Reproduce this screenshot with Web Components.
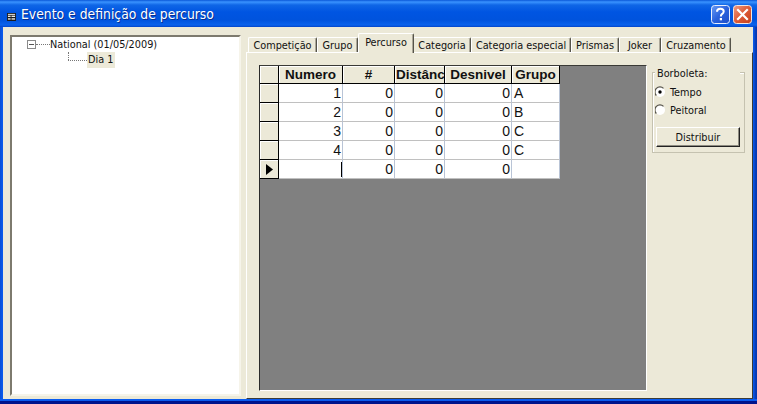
<!DOCTYPE html>
<html>
<head>
<meta charset="utf-8">
<title>Evento e definição de percurso</title>
<style>
  html, body { margin: 0; padding: 0; background: #0a50d8; }
</style>
</head>
<body>
<xp-window title="Evento e definição de percurso">
  <event-tree></event-tree>
  <tab-panel>
    <course-grid></course-grid>
    <side-group></side-group>
  </tab-panel>
</xp-window>

<script>
const UI_FONT = '"DejaVu Sans Condensed", "DejaVu Sans", sans-serif';

class XpWindow extends HTMLElement {
  constructor() {
    super();
    this.shadowDOM = this.attachShadow({mode: "open"});
  }

  connectedCallback() {
    this.shadowDOM.innerHTML =
    `<style>
      * { box-sizing: border-box; }
      :host {
        display: flex;
        flex-direction: column;
        box-sizing: border-box;
        width: 757px;
        height: 404px;
        overflow: hidden;
        background: linear-gradient(to right, #0a4fd6 0, #0a5cf0 3px, #0a5cf0 753px, #0638b0 756px);
      }
      .titlebar {
        flex: none;
        height: 27px;
        display: flex;
        align-items: center;
        padding: 0 5px 0 7px;
        color: white;
        background: linear-gradient(to bottom, #0a58d8 0, #3a93ff 2px, #0f66e6 5px, #0055e2 12px, #0053dd 20px, #0a62ec 25px, #0344c8 27px);
      }
      .sysicon { width: 9px; height: 8px; margin: 6px 5px 0 0; flex: none; }
      .title {
        flex: 1;
        font: 13.8px ${UI_FONT};
        padding-top: 1px;
        text-shadow: 1px 1px 0 #0b2f8c;
        white-space: nowrap;
      }
      .btn { width: 19px; height: 19px; flex: none; margin: 2px 0 0 3px; display: block; }
      .body {
        flex: none;
        height: 372px;
        display: flex;
        background: #ece9d8;
        padding: 6px 0 0 7px;
        margin: 0 4px 0 3px;
        gap: 5px;
      }
      .bottom { flex: 1; background: linear-gradient(#0a5cf0 0 2px, #00138c 2px); }
    </style>
    <div class="titlebar">
      <svg class="sysicon" viewBox="0 0 10 9">
        <rect width="10" height="9" fill="#1c1c1c"/>
        <rect x="1" y="1" width="8" height="1" fill="#fff"/>
        <rect x="1" y="3" width="3" height="1.4" fill="#fff"/><rect x="5" y="3" width="4" height="1.4" fill="#fff"/>
        <rect x="1" y="6" width="3" height="1.4" fill="#fff"/><rect x="5" y="6" width="4" height="1.4" fill="#fff"/>
      </svg>
      <div class="title">${this.getAttribute("title")}</div>
      <svg class="btn" viewBox="0 0 19 19">
        <defs><linearGradient id="h" x1="0" y1="0" x2="1" y2="1"><stop offset="0" stop-color="#6a9cf5"/><stop offset=".5" stop-color="#2a62dd"/><stop offset="1" stop-color="#1f4fc8"/></linearGradient></defs>
        <rect x=".5" y=".5" width="18" height="18" rx="3" fill="url(#h)" stroke="#e8eefc"/>
        <path d="M6 6.8C6 4.6 7.4 3.7 9.4 3.7c2 0 3.3 1.1 3.3 2.7 0 1.4-.8 2-1.8 2.7-.8.6-1 1-1 1.9v.6" fill="none" stroke="#fff" stroke-width="2"/>
        <rect x="8.8" y="13" width="2.2" height="2.3" fill="#fff"/>
      </svg>
      <svg class="btn" viewBox="0 0 19 19">
        <defs><linearGradient id="c" x1="0" y1="0" x2="1" y2="1"><stop offset="0" stop-color="#ec9c84"/><stop offset=".5" stop-color="#dd5a36"/><stop offset="1" stop-color="#c2401c"/></linearGradient></defs>
        <rect x=".5" y=".5" width="18" height="18" rx="3" fill="url(#c)" stroke="#f3e6e0"/>
        <path d="M5 5l9 9M14 5l-9 9" stroke="#fff" stroke-width="2.2" stroke-linecap="square"/>
      </svg>
    </div>
    <div class="body"><slot></slot></div>
    <div class="bottom"></div>`;
  }
}

class EventTree extends HTMLElement {
  constructor() {
    super();
    this.shadowDOM = this.attachShadow({mode: "open"});
  }

  connectedCallback() {
    this.shadowDOM.innerHTML =
    `<style>
      * { box-sizing: border-box; }
      :host {
        display: block;
        box-sizing: border-box;
        flex: none;
        width: 231px;
        margin: 2px 0 3px 0;
        background: white;
        border: 2px solid;
        border-color: #7d7a6e #f6f4ea #f6f4ea #7d7a6e;
        padding: 0 0 0 15px;
        font: 10.8px ${UI_FONT};
        color: #111;
      }
      .row { display: flex; align-items: center; height: 15px; white-space: nowrap; }
      .box {
        width: 9px; height: 9px; flex: none;
        border: 1px solid #8a8a8a;
        background: linear-gradient(#555,#555) center/5px 1px no-repeat;
      }
      .dots { flex: none; border-top: 1px dotted #777; height: 0; }
      .child { padding-left: 41px; position: relative; height: 16px; }
      .child::before {
        content: ""; position: absolute; left: 41px; top: 0; height: 8px;
        border-left: 1px dotted #777;
      }
      .sel { background: #ece9d8; padding: 0 1px; height: 16px; line-height: 16px; width: 28px; }
    </style>
    <div class="row"><span class="box"></span><span class="dots" style="width:14px"></span><span>National (01/05/2009)</span></div>
    <div class="row child"><span class="dots" style="width:19px"></span><span class="sel">Dia 1</span></div>`;
  }
}

class TabPanel extends HTMLElement {
  constructor() {
    super();
    this.shadowDOM = this.attachShadow({mode: "open"});
  }

  connectedCallback() {
    const tabs = [["Competição",69],["Grupo",41],["Percurso",56],["Categoria",58],["Categoria especial",100],["Prismas",48],["Joker",42],["Cruzamento",70]];
    this.shadowDOM.innerHTML =
    `<style>
      * { box-sizing: border-box; }
      :host {
        display: flex;
        box-sizing: border-box;
        flex-direction: column;
        flex: none;
        width: 507px;
        font: 10.8px ${UI_FONT};
        color: #111;
      }
      .tabs { display: flex; height: 20px; padding: 0 0 0 2px; flex: none; align-items: flex-end; }
      .tab {
        height: 16px;
        display: flex; align-items: center; justify-content: center;
        background: #ece9d8;
        border: 1px solid #fff;
        border-bottom: 0;
        border-right: 1px solid #55534a;
        box-shadow: inset -1px 0 0 #aca899;
        white-space: nowrap;
        border-radius: 2px 2px 0 0;
      }
      .tab.on {
        height: 20px;
        padding-bottom: 2px;
        margin-right: -1px;
        position: relative;
        z-index: 1;
      }
      .page {
        flex: 1;
        min-height: 0;
        display: flex;
        gap: 5px;
        background: #ece9d8;
        border: 1px solid;
        border-color: #fff #3d3c36 #3d3c36 #fff;
        padding: 12px 6px 7px 12px;
        margin-top: -1px;
      }
    </style>
    <div class="tabs">
      ${tabs.map(([t, w]) => `<div class="tab${t === "Percurso" ? " on" : ""}" style="width:${w}px">${t}</div>`).join("")}
    </div>
    <div class="page"><slot></slot></div>`;
  }
}

class CourseGrid extends HTMLElement {
  constructor() {
    super();
    this.shadowDOM = this.attachShadow({mode: "open"});
  }

  connectedCallback() {
    const rows = [["1","0","0","0","A"],["2","0","0","0","B"],["3","0","0","0","C"],["4","0","0","0","C"]];
    const head = ["Numero","#","Distânc","Desnivel","Grupo"];
    let html = `<div class="c rh"></div>` + head.map(h => `<div class="c hd">${h}</div>`).join("");
    rows.forEach(r => {
      html += `<div class="c rh"></div>` + r.map((v, i) => `<div class="c ${i == 4 ? "l" : "n"}">${v}</div>`).join("");
    });
    html += `<div class="c rh cur"><svg width="7" height="11" viewBox="0 0 7 11"><path d="M0 0l7 5.5L0 11z" fill="#000"/></svg></div>
      <div class="c n caret"><span></span></div><div class="c n">0</div><div class="c n">0</div><div class="c n">0</div><div class="c l"></div>`;
    this.shadowDOM.innerHTML =
    `<style>
      * { box-sizing: border-box; }
      :host {
        display: block;
        box-sizing: border-box;
        flex: none;
        width: 388px;
        background: #808080;
        border: 1px solid #000;
        border-color: #3a3a36 #fff #fff #2a2a2a;
        font: 14px "Liberation Sans", Arial, sans-serif;
        color: #111;
      }
      .grid {
        display: grid;
        grid-template-columns: 19px 64px 52px 50px 67px 48px;
        grid-template-rows: 18px;
        grid-auto-rows: 19px;
        width: 300px;
      }
      .c {
        line-height: 18px;
        background: white;
        border-right: 1px solid #b9c4d6;
        border-bottom: 1px solid #c0c0c0;
        padding: 0 1px;
        white-space: nowrap;
        overflow: hidden;
      }
      .rh { background: #ece9d8; border-right: 1px solid #000; border-bottom: 1px solid #000; display: flex; align-items: center; justify-content: center; box-shadow: inset 1px 1px 0 #fff; }
      .hd { background: #ece9d8; font-weight: bold; font-size: 13.5px; line-height: 17px; text-align: center; border-right: 1px solid #000; border-bottom: 1px solid #000; box-shadow: inset 1px 1px 0 #fff; }
      .n { text-align: right; }
      .l { text-align: left; padding-left: 2px; }
      .caret { display: flex; justify-content: flex-end; align-items: center; padding: 0; }
      .caret span { width: 1px; height: 15px; background: #000; }
    </style>
    <div class="grid">${html}</div>`;
  }
}

class SideGroup extends HTMLElement {
  constructor() {
    super();
    this.shadowDOM = this.attachShadow({mode: "open"});
  }

  connectedCallback() {
    const radio = dot => `<svg width="10" height="12" viewBox="0 0 10 12">
        <circle cx="5" cy="6" r="5" fill="#fff"/>
        <path d="M1.4 9.5A4.5 4.5 0 0 1 8.5 2.4" fill="none" stroke="#55534a" stroke-width="1.2"/>
        ${dot ? '<circle cx="5" cy="6" r="1.7" fill="#000"/>' : ""}
      </svg>`;
    this.shadowDOM.innerHTML =
    `<style>
      * { box-sizing: border-box; }
      :host {
        display: block;
        box-sizing: border-box;
        flex: none;
        width: 93px;
        height: 81px;
        margin-top: 7px;
        border: 1px solid #c5c2b0;
        box-shadow: inset 1px 1px 0 #fff;
        padding: 0 4px 0 2px;
        font: 10.8px ${UI_FONT};
        color: #111;
      }
      .legend { margin: -7px 0 0 0; padding: 0 0 0 2px; background: #ece9d8; width: 85px; height: 15px; line-height: 15px; }
      .radio { display: flex; align-items: center; height: 18px; }
      .radio svg { flex: none; margin-right: 5px; }
      .first { margin-top: 2px; }
      button {
        display: block;
        width: 84px;
        height: 20px;
        margin: 8px 0 0 1px;
        font: inherit;
        color: inherit;
        background: #ece9d8;
        border: 1px solid;
        border-color: #fff #222 #222 #fff;
        box-shadow: inset -1px -1px 0 #8d8b80;
        padding: 0;
      }
    </style>
    <div class="legend">Borboleta:</div>
    <div class="radio first">${radio(true)}<span>Tempo</span></div>
    <div class="radio">${radio(false)}<span>Peitoral</span></div>
    <button>Distribuir</button>`;
  }
}

customElements.define("xp-window", XpWindow);
customElements.define("event-tree", EventTree);
customElements.define("tab-panel", TabPanel);
customElements.define("course-grid", CourseGrid);
customElements.define("side-group", SideGroup);
</script>
</body>
</html>
